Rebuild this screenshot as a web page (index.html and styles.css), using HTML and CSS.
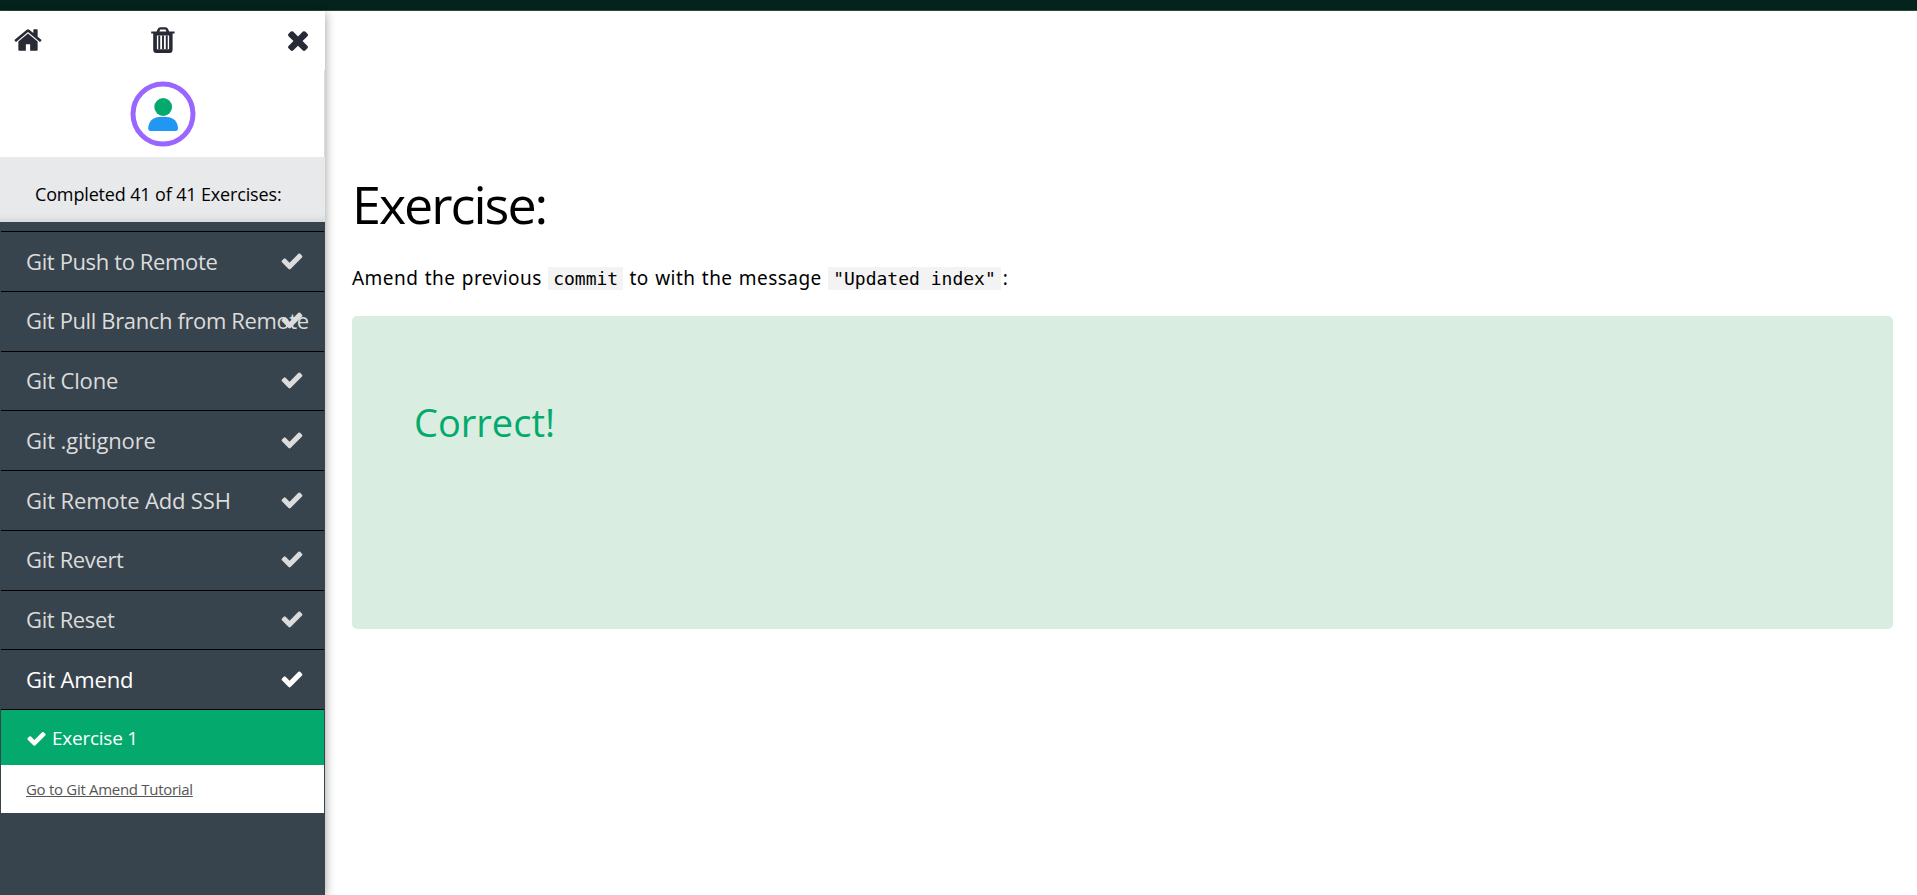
FILE: index.html
```html
<!DOCTYPE html>
<html lang="en">
<head>
<meta charset="utf-8">
<title>Git Exercises</title>
<link rel="stylesheet" href="styles.css">
</head>
<body>
<svg class="defs" width="0" height="0" aria-hidden="true">
  <symbol id="check" viewBox="0 0 1792 1792"><path d="M1671 566q0 40-28 68l-724 724-136 136q-28 28-68 28t-68-28l-136-136-362-362q-28-28-28-68t28-68l136-136q28-28 68-28t68 28l294 295 656-657q28-28 68-28t68 28l136 136q28 28 28 68z"/></symbol>
</svg>
<div class="topbar"></div>
<div class="page">
  <nav class="sidebar">
    <div class="tools">
      <svg class="tool" viewBox="0 0 1792 1792"><path d="M1472 992v480q0 26-19 45t-45 19h-384v-384h-256v384h-384q-26 0-45-19t-19-45v-480q0-1 .5-3t.5-3l575-474 575 474q1 2 1 6zm223-69l-62 74q-8 9-21 11h-3q-13 0-21-7l-692-577-692 577q-12 8-24 7-13-2-21-11l-62-74q-8-10-7-23.5t11-21.5l719-599q32-26 76-26t76 26l244 204v-195q0-14 9-23t23-9h192q14 0 23 9t9 23v408l219 182q10 8 11 21.5t-7 23.5z"/></svg>
      <svg class="tool" viewBox="0 0 30 30"><path fill-rule="evenodd" d="M3.200 6.500h5.400l1.300-2.700q.7-1.500 2.300-1.500h5.400q1.600 0 2.300 1.500l1.300 2.700h5.400v2h-2v16q0 3.400-2.800 3.400H8q-2.800 0-2.800-3.400v-16h-2zM11.400 6.500h7l-.8-2h-5.400zM8.900 10.500v13.700h12.200v-13.700z"/><path d="M10.300 10.500h1.900v13.700h-1.900zM14.050 10.500h1.900v13.700h-1.900zM17.800 10.500h1.900v13.700h-1.900z"/></svg>
      <svg class="tool" viewBox="0 0 1792 1792"><path d="M1490 1322q0 40-28 68l-136 136q-28 28-68 28t-68-28l-294-294-294 294q-28 28-68 28t-68-28l-136-136q-28-28-28-68t28-68l294-294-294-294q-28-28-28-68t28-68l136-136q28-28 68-28t68 28l294 294 294-294q28-28 68-28t68 28l136 136q28 28 28 68t-28 68l-294 294 294 294q28 28 28 68z"/></svg>
    </div>
    <div class="profile">
      <svg class="avatar" viewBox="0 0 66 66">
        <circle cx="33" cy="33" r="30" fill="#fff" stroke="#9966ff" stroke-width="5"/>
        <circle cx="33.2" cy="26" r="8.9" fill="#04aa6d"/>
        <path d="M18.2 47.6c0-6.600 4.600-11.600 11.200-11.600h7.400c6.600 0 11.200 5 11.200 11.600q0 2.400-2 2.400H20.200q-2 0-2-2.400z" fill="#2196f3"/>
      </svg>
    </div>
    <div class="progress"><span class="progress-text">Completed 41 of 41 Exercises:</span></div>
    <div class="menu">
      <a class="item snug"><span>Git Push to Remote</span><svg class="tick"><use href="#check"/></svg></a>
      <a class="item snug"><span>Git Pull Branch from Remote</span><svg class="tick"><use href="#check"/></svg></a>
      <a class="item"><span>Git Clone</span><svg class="tick"><use href="#check"/></svg></a>
      <a class="item"><span>Git .gitignore</span><svg class="tick"><use href="#check"/></svg></a>
      <a class="item"><span>Git Remote Add SSH</span><svg class="tick"><use href="#check"/></svg></a>
      <a class="item snug"><span>Git Revert</span><svg class="tick"><use href="#check"/></svg></a>
      <a class="item snug"><span>Git Reset</span><svg class="tick"><use href="#check"/></svg></a>
      <a class="item active"><span>Git Amend</span><svg class="tick"><use href="#check"/></svg></a>
      <a class="exercise"><svg class="small-tick"><use href="#check"/></svg><span>Exercise 1</span></a>
      <div class="tutorial"><a class="tutorial-link">Go to Git Amend Tutorial</a></div>
    </div>
  </nav>
  <main class="content">
    <h1 class="title">Exercise:</h1>
    <p class="task">Amend the previous <code class="code">commit</code> to with the message <code class="code last">"Updated index"</code>:</p>
    <section class="result"><h2 class="verdict">Correct!</h2></section>
  </main>
</div>
</body>
</html>
```
FILE: styles.css
```css
* { box-sizing: border-box; }

body {
  margin: 0;
  height: 895px;
  overflow: hidden;
  display: flex;
  flex-direction: column;
  background: #fff;
  color: #000;
  font-family: "Open Sans", "Noto Sans", sans-serif;
}

.defs { position: absolute; }

.topbar {
  flex: none;
  height: 11px;
  background: #04231d;
  border-bottom: 1px solid #2b4741;
}

.page { flex: 1; display: flex; min-height: 0; }

.sidebar {
  flex: none;
  width: 325px;
  display: flex;
  flex-direction: column;
  background: #38444d;
  box-shadow: 0 2px 10px rgba(0, 0, 0, 0.4);
}

.tools {
  flex: none;
  height: 59px;
  padding: 13.500px 12px 0 12.500px;
  display: flex;
  justify-content: space-between;
  background: #fff;
}

.tool { width: 30px; height: 30px; fill: #282a35; }

.profile {
  flex: none;
  height: 87px;
  padding: 10.700px 0 0 1px;
  display: flex;
  justify-content: center;
  background: #fff;
  border-right: 1px solid #dcdcdc;
}

.avatar { width: 66px; height: 66px; }

.progress {
  flex: none;
  height: 65px;
  padding: 24px 0 0 35px;
  background: #e7e9eb;
  box-shadow: inset 0 -9px 8px -8px rgba(0, 0, 0, 0.12);
}

.progress-text {
  display: block;
  font-size: 18px;
  line-height: 26px;
  letter-spacing: -0.150px;
  white-space: nowrap;
}

.menu { padding: 9px 1px 0; display: flex; flex-direction: column; }

.item {
  height: 59.750px;
  border-top: 1px solid #000;
  padding: 0 20.500px 1.500px 25px;
  display: grid;
  grid-template-columns: minmax(0, 1fr) 24px;
  align-items: center;
  color: #dcdcdc;
  font-size: 22px;
  line-height: 30px;
  letter-spacing: -0.150px;
  white-space: nowrap;
}

.snug { letter-spacing: -0.370px; }

.active { color: #fff; border-bottom: 1px solid #000; height: 61px; }

.tick { width: 24px; height: 24px; fill: currentColor; }

.exercise {
  height: 55px;
  padding: 1px 0 0 25px;
  display: flex;
  align-items: center;
  gap: 5px;
  background: #04aa6d;
  color: #fff;
  font-size: 19px;
  letter-spacing: -0.250px;
}

.small-tick { width: 21px; height: 21px; fill: currentColor; }

.tutorial {
  height: 48px;
  padding-left: 25px;
  display: flex;
  align-items: center;
  background: #fff;
}

.tutorial-link {
  color: #555;
  font-size: 15px;
  letter-spacing: -0.300px;
  text-decoration: underline;
}

.content { flex: 1; padding: 154px 24px 0 27px; }

.title {
  margin: 0;
  font-size: 52px;
  line-height: 78px;
  font-weight: 400;
  letter-spacing: -2px;
}

.task {
  margin: 20px 0 0;
  font-family: "Noto Sans", sans-serif;
  font-size: 19px;
  line-height: 30px;
  letter-spacing: 0.450px;
  word-spacing: 1px;
  white-space: nowrap;
}

.code {
  padding: 1px 5px;
  background: #f3f3f3;
  font-family: "DejaVu Sans Mono", monospace;
  font-size: 18px;
  letter-spacing: 0;
  word-spacing: 0;
}

.last { margin-right: 2px; }

.result {
  margin-top: 22px;
  height: 313px;
  padding: 79px 62px;
  border-radius: 5px;
  background: #d9ede1;
}

.verdict {
  margin: 0;
  color: #04aa6d;
  font-size: 38px;
  line-height: 54px;
  font-weight: 400;
}
```
